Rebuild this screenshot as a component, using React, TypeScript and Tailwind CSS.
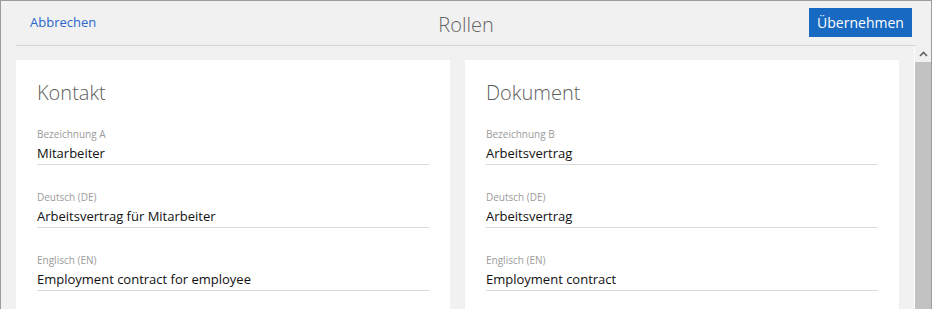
import React from "react";

type Field = { label: string; value: string };

const cards: { title: string; fields: Field[] }[] = [
  {
    title: "Kontakt",
    fields: [
      { label: "Bezeichnung A", value: "Mitarbeiter" },
      { label: "Deutsch (DE)", value: "Arbeitsvertrag für Mitarbeiter" },
      { label: "Englisch (EN)", value: "Employment contract for employee" },
    ],
  },
  {
    title: "Dokument",
    fields: [
      { label: "Bezeichnung B", value: "Arbeitsvertrag" },
      { label: "Deutsch (DE)", value: "Arbeitsvertrag" },
      { label: "Englisch (EN)", value: "Employment contract" },
    ],
  },
];

const Card = ({ title, fields }: { title: string; fields: Field[] }) => (
  <div className="w-[434px] shrink-0 bg-white px-[21px] pt-[19px]">
    <h2 className="text-[20px] leading-[28px] font-light text-[#5e5e5e]">{title}</h2>
    <div className="mt-[20px] flex flex-col gap-[25px]">
      {fields.map((f) => (
        <div key={f.label} className="border-b border-[#dadada]">
          <div className="text-[10px] leading-[14px] text-[#9b9b9b]">{f.label}</div>
          <div className="mt-[3px] pb-[1px] text-[13px] leading-[19px] text-[#111111]">
            {f.value}
          </div>
        </div>
      ))}
    </div>
  </div>
);

export default function App() {
  return (
    <div
      className="flex h-[309px] w-[932px] flex-col overflow-hidden border border-b-0 border-[#9c9c9c] bg-[#f1f1f1]"
      style={{ fontFamily: '"Segoe UI", "Open Sans", "Noto Sans", sans-serif' }}
    >
      <header className="relative mx-[15px] flex h-[45px] shrink-0 items-center justify-between border-b border-[#d4d4d4] pl-[14px] pr-[4px]">
        <a className="text-[13px] text-[#2a66cc]">Abbrechen</a>
        <h1 className="absolute left-1/2 top-[9px] -translate-x-1/2 text-[20px] font-light text-[#666666]">
          Rollen
        </h1>
        <button className="mb-[1px] h-[29px] w-[103px] bg-[#1869c1] text-[14px] text-white">
          Übernehmen
        </button>
      </header>
      <div className="flex min-h-0 flex-1">
        <div className="flex flex-1 gap-[15px] pl-[15px] pt-[14px]">
          {cards.map((c) => (
            <Card key={c.title} title={c.title} fields={c.fields} />
          ))}
        </div>
        <div className="flex w-[17px] shrink-0 flex-col border-l border-white bg-[#f0f0f0]">
          <div className="flex h-[16px] items-center justify-center">
            <svg width="9" height="6" viewBox="0 0 9 6">
              <path d="M1 5 L4.5 1.5 L8 5" fill="none" stroke="#606060" strokeWidth="1.6" />
            </svg>
          </div>
          <div className="flex-1 bg-[#c2c2c2]" />
        </div>
      </div>
    </div>
  );
}
